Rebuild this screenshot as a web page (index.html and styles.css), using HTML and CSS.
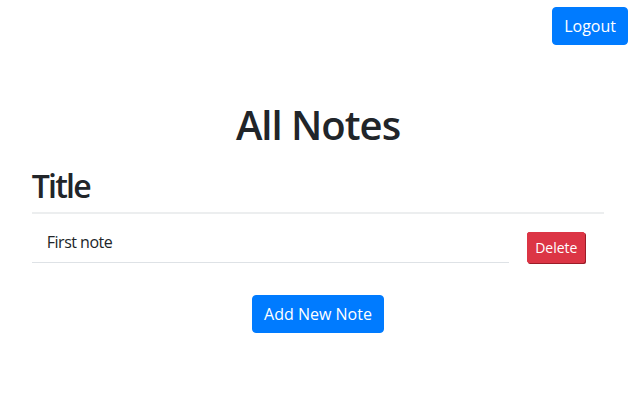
FILE: index.html
```html
<!DOCTYPE html>
<html>
<head>
<meta charset="utf-8">
<link rel="stylesheet" href="styles.css">
</head>
<body>
<header class="topbar">
  <button class="btn btn-primary">Logout</button>
</header>
<main class="page">
  <h1 class="page-title">All Notes</h1>
  <div class="notes">
    <div class="notes-head">
      <h2 class="notes-head-title">Title</h2>
    </div>
    <div class="note-row">
      <div class="note-title">First note</div>
      <div class="note-actions">
        <button class="btn btn-danger btn-sm">Delete</button>
      </div>
    </div>
  </div>
  <div class="add-wrap">
    <button class="btn btn-primary">Add New Note</button>
  </div>
</main>
</body>
</html>
```
FILE: styles.css
```css
* { box-sizing: border-box; }
body {
  margin: 0;
  font-family: "Open Sans", "Noto Sans", sans-serif;
  font-size: 16px;
  line-height: 1.5;
  color: #212529;
  background: #fff;
}
.topbar {
  display: flex;
  justify-content: flex-end;
  padding: 7px 8px 0 0;
}
.btn {
  font-family: inherit;
  font-size: 16px;
  line-height: 24px;
  padding: 6px 11px;
  border: 1px solid transparent;
  border-radius: 4px;
  color: #fff;
  cursor: pointer;
}
.btn-primary { background: #007bff; border-color: #007bff; }
.btn-danger {
  background: #dc3545;
  border-color: #dc3545;
  box-shadow: 1px 1px 0 #9b1c28;
}
.btn-sm {
  font-size: 14px;
  line-height: 21px;
  padding: 4px 7px;
  border-radius: 2px;
}
.page-title {
  margin: 56px 0 0;
  text-align: center;
  font-size: 40px;
  font-weight: 600;
  line-height: 1.2;
  letter-spacing: -1px;
}
.notes {
  width: 90%;
  margin: 18px auto 0;
}
.notes-head {
  border-bottom: 2px solid #eceeef;
  padding: 0 0 7px;
}
.notes-head-title {
  margin: 0;
  font-size: 32px;
  font-weight: 600;
  line-height: 1.2;
  letter-spacing: -1.8px;
}
.note-row {
  display: flex;
  align-items: flex-end;
}
.note-title {
  flex: 1;
  padding: 16px 15px 8px;
  border-bottom: 1px solid #dee2e6;
  letter-spacing: -0.5px;
}
.note-actions {
  width: 95px;
  padding: 0 18px;
}
.add-wrap {
  display: flex;
  justify-content: center;
  margin-top: 32px;
}
```
